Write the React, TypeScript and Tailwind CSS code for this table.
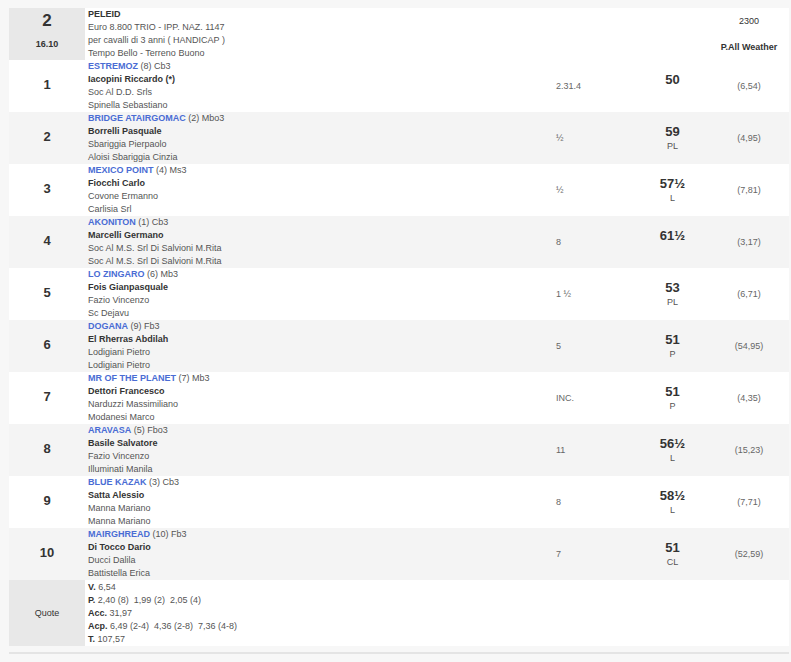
const rows = [
  { pos: "1", horse: "ESTREMOZ", info: "(8) Cb3", jockey: "Iacopini Riccardo (*)", l3: "Soc Al D.D. Srls", l4: "Spinella Sebastiano", dist: "2.31.4", weight: "50", tag: "", odds: "(6,54)" },
  { pos: "2", horse: "BRIDGE ATAIRGOMAC", info: "(2) Mbo3", jockey: "Borrelli Pasquale", l3: "Sbariggia Pierpaolo", l4: "Aloisi Sbariggia Cinzia", dist: "½", weight: "59", tag: "PL", odds: "(4,95)" },
  { pos: "3", horse: "MEXICO POINT", info: "(4) Ms3", jockey: "Fiocchi Carlo", l3: "Covone Ermanno", l4: "Carlisia Srl", dist: "½", weight: "57½", tag: "L", odds: "(7,81)" },
  { pos: "4", horse: "AKONITON", info: "(1) Cb3", jockey: "Marcelli Germano", l3: "Soc Al M.S. Srl Di Salvioni M.Rita", l4: "Soc Al M.S. Srl Di Salvioni M.Rita", dist: "8", weight: "61½", tag: "", odds: "(3,17)" },
  { pos: "5", horse: "LO ZINGARO", info: "(6) Mb3", jockey: "Fois Gianpasquale", l3: "Fazio Vincenzo", l4: "Sc Dejavu", dist: "1 ½", weight: "53", tag: "PL", odds: "(6,71)" },
  { pos: "6", horse: "DOGANA", info: "(9) Fb3", jockey: "El Rherras Abdilah", l3: "Lodigiani Pietro", l4: "Lodigiani Pietro", dist: "5", weight: "51", tag: "P", odds: "(54,95)" },
  { pos: "7", horse: "MR OF THE PLANET", info: "(7) Mb3", jockey: "Dettori Francesco", l3: "Narduzzi Massimiliano", l4: "Modanesi Marco", dist: "INC.", weight: "51", tag: "P", odds: "(4,35)" },
  { pos: "8", horse: "ARAVASA", info: "(5) Fbo3", jockey: "Basile Salvatore", l3: "Fazio Vincenzo", l4: "Illuminati Manila", dist: "11", weight: "56½", tag: "L", odds: "(15,23)" },
  { pos: "9", horse: "BLUE KAZAK", info: "(3) Cb3", jockey: "Satta Alessio", l3: "Manna Mariano", l4: "Manna Mariano", dist: "8", weight: "58½", tag: "L", odds: "(7,71)" },
  { pos: "10", horse: "MAIRGHREAD", info: "(10) Fb3", jockey: "Di Tocco Dario", l3: "Ducci Dalila", l4: "Battistella Erica", dist: "7", weight: "51", tag: "CL", odds: "(52,59)" },
];

const cols = "grid grid-cols-[76px_465px_75px_95px_58px]";

export default function App() {
  return (
    <div className="min-h-[662px] bg-[#f7f7f7] pt-2 pl-[9px] pr-[2px] text-[9px] leading-[13px] text-[#555]" style={{ fontFamily: '"Liberation Sans", Arial, sans-serif' }}>
      <div className="border-b-2 border-[#e4e4e4] pb-[6px]">
        {/* header */}
        <div className={`${cols} bg-white`}>
          <div className="flex h-[52px] flex-col items-center bg-[#e8e8e8] pt-[3px] font-bold text-[#333]">
            <div className="text-[17px] leading-[20px]">2</div>
            <div className="mt-[7px]">16.10</div>
          </div>
          <div className="pl-[3px]">
            <div className="font-bold text-[#333]">PELEID</div>
            <div>Euro 8.800 TRIO - IPP. NAZ. 1147</div>
            <div>per cavalli di 3 anni ( HANDICAP )</div>
            <div>Tempo Bello - Terreno Buono</div>
          </div>
          <div />
          <div />
          <div className="flex flex-col items-center pt-[7px] text-[#333]">
            <div>2300</div>
            <div className="mt-[13px] font-bold">P.All Weather</div>
          </div>
        </div>

        {rows.map((r, i) => (
          <div key={r.pos} className={`${cols} h-[52px] ${i % 2 === 0 ? "bg-white" : "bg-[#f4f4f4]"}`}>
            <div className="flex items-center justify-center pb-[4px] text-[13px] font-bold text-[#333]">{r.pos}</div>
            <div className="pl-[3px]">
              <div>
                <span className="font-bold text-[#4a6cd4]">{r.horse}</span> {r.info}
              </div>
              <div className="font-bold text-[#333]">{r.jockey}</div>
              <div>{r.l3}</div>
              <div>{r.l4}</div>
            </div>
            <div className="flex items-center pl-[6px] text-[#666]">{r.dist}</div>
            <div className="flex flex-col items-center justify-center">
              <div className="text-[13px] leading-[16px] font-bold text-[#333]">{r.weight}</div>
              <div className="h-[13px]">{r.tag}</div>
            </div>
            <div className="flex items-center justify-center text-[#666]">{r.odds}</div>
          </div>
        ))}

        {/* quote */}
        <div className="grid grid-cols-[76px_1fr] bg-white">
          <div className="flex items-center justify-center bg-[#e8e8e8] text-[#333]">Quote</div>
          <div className="pl-[3px] pt-[1px]">
            <div><b className="text-[#333]">V.</b> 6,54</div>
            <div><b className="text-[#333]">P.</b> 2,40 (8)&nbsp; 1,99 (2)&nbsp; 2,05 (4)</div>
            <div><b className="text-[#333]">Acc.</b> 31,97</div>
            <div><b className="text-[#333]">Acp.</b> 6,49 (2-4)&nbsp; 4,36 (2-8)&nbsp; 7,36 (4-8)</div>
            <div><b className="text-[#333]">T.</b> 107,57</div>
          </div>
        </div>
      </div>
    </div>
  );
}
